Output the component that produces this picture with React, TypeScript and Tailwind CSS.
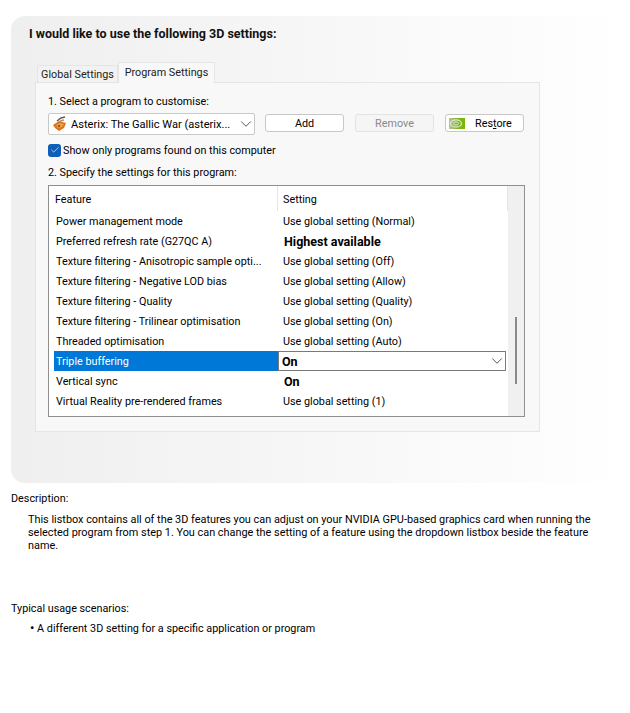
import React from 'react';
import { ChevronDown, Check } from 'lucide-react';

const rows = [
    { feature: 'Power management mode', setting: 'Use global setting (Normal)' },
    { feature: 'Preferred refresh rate (G27QC A)', setting: 'Highest available', bold: true },
    { feature: 'Texture filtering - Anisotropic sample opti...', setting: 'Use global setting (Off)' },
    { feature: 'Texture filtering - Negative LOD bias', setting: 'Use global setting (Allow)' },
    { feature: 'Texture filtering - Quality', setting: 'Use global setting (Quality)' },
    { feature: 'Texture filtering - Trilinear optimisation', setting: 'Use global setting (On)' },
    { feature: 'Threaded optimisation', setting: 'Use global setting (Auto)' },
    { feature: 'Triple buffering', setting: 'On', bold: true, selected: true },
    { feature: 'Vertical sync', setting: 'On', bold: true },
    { feature: 'Virtual Reality pre-rendered frames', setting: 'Use global setting (1)' },
];

const GameIcon = () => (
    <svg width="16" height="16" viewBox="0 0 16 16" className="shrink-0">
        <path d="M1 9 L7 5 L14 7 L12 12 L7 15 L3 12 Z" fill="#d9761f" />
        <path d="M4 9 L8 7 L12 8 L10 11 L6 12 Z" fill="#f0a040" />
        <path d="M5 5 L9 2 L13 1" stroke="#6b5a45" strokeWidth="1.5" fill="none" />
        <path d="M8 5 L12 4" stroke="#a89880" strokeWidth="1.5" fill="none" />
        <circle cx="7" cy="10" r="1" fill="#7a3a10" />
    </svg>
);

const NvidiaIcon = () => (
    <svg width="16" height="11" viewBox="0 0 16 11" className="shrink-0">
        <defs>
            <linearGradient id="nv" x1="0" x2="1" y1="0" y2="0">
                <stop offset="0" stopColor="#b9c4a8" />
                <stop offset="0.5" stopColor="#84b02c" />
                <stop offset="1" stopColor="#76b900" />
            </linearGradient>
        </defs>
        <rect width="16" height="11" fill="url(#nv)" />
        <ellipse cx="7" cy="5.5" rx="5.5" ry="3.6" fill="none" stroke="#dfeac8" strokeWidth="1.2" />
        <ellipse cx="7" cy="5.5" rx="2.6" ry="1.6" fill="none" stroke="#dfeac8" strokeWidth="1" />
    </svg>
);

const Button: React.FC<{ label: React.ReactNode; disabled?: boolean; className?: string }> = ({ label, disabled, className }) => (
    <button className={`h-[18px] w-[79px] rounded-[3px] border flex items-center justify-center ${disabled ? 'border-[#e3e3e3] bg-[#f5f5f5] text-[#8a8a8a]' : 'border-[#c8c8c8] bg-white text-black'} ${className ?? ''}`}>
        {label}
    </button>
);

const App: React.FC = () => {
    return (
        <div className="w-[630px] h-[713px] bg-white text-black text-[10.8px] leading-[13px] font-['Roboto',sans-serif] overflow-hidden pt-4">
            <div className="ml-[11px] h-[467px] rounded-l-[14px] bg-gradient-to-r from-[#efefef] to-white pt-[11px] pl-[18px]">
                <h1 className="font-bold text-[12.5px] leading-[13px] text-[#111]">I would like to use the following 3D settings:</h1>

                <div className="ml-[8px] mt-[22px] flex items-end h-[20px] relative z-10">
                    <div className="h-[17px] w-[81px] bg-[#f2f2f2] border border-b-0 border-[#e5e5e5] flex items-center justify-center text-[#222] whitespace-nowrap">Global Settings</div>
                    <div className="h-[21px] w-[97px] -mb-px pb-[2px] bg-[#f8f8f8] border border-b-0 border-[#e5e5e5] flex items-center justify-center text-[#222] whitespace-nowrap">Program Settings</div>
                </div>

                <div className="ml-[6px] w-[505px] h-[350px] bg-[#f8f8f8] border border-[#e5e5e5] pl-3 pr-[14px] pt-[12px]">
                    <div className="h-[13px]">1. Select a program to customise:</div>
                    <div className="flex items-center mt-[5px]">
                        <div className="w-[207px] h-[22px] bg-white border border-[#c8c8c8] rounded-[2px] flex items-center pl-[3px] pr-[3px] gap-[3px]">
                            <GameIcon />
                            <span className="flex-1 whitespace-nowrap text-[11.1px]">Asterix: The Gallic War (asterix...</span>
                            <ChevronDown size={18} strokeWidth={1.2} className="text-[#444] shrink-0 -ml-[14px] -mr-[4px]" />
                        </div>
                        <Button label="Add" className="ml-[10px] -mt-[2px]" />
                        <Button label="Remove" disabled className="ml-[11px] -mt-[2px]" />
                        <button className="ml-[11px] -mt-[2px] h-[18px] w-[79px] rounded-[3px] border border-[#c8c8c8] bg-white flex items-center pl-[3px]">
                            <NvidiaIcon />
                            <span className="ml-[10px]">Res<span className="underline">t</span>ore</span>
                        </button>
                    </div>
                    <div className="flex items-center mt-[8px] h-[14px]">
                        <span className="w-[13px] h-[13px] rounded-[3px] bg-[#0f5fb8] flex items-center justify-center shrink-0">
                            <Check size={10} strokeWidth={1.5} className="text-white" />
                        </span>
                        <span className="ml-[2px]">Show only programs found on this computer</span>
                    </div>
                    <div className="mt-[9px] h-[13px]">2. Specify the settings for this program:</div>

                    <div className="mt-[6px] w-[477px] h-[232px] border border-[#8f8f8f] bg-white flex">
                        <div className="w-[459px] flex flex-col">
                            <div className="h-[25px] flex items-center shrink-0">
                                <div className="w-[229px] h-full border-r border-[#e5e5e5] pl-[6px] pt-[2px] flex items-center">Feature</div>
                                <div className="flex-1 h-full border-r border-[#e5e5e5] pl-[5px] pt-[2px] flex items-center">Setting</div>
                            </div>
                            {rows.map(row => (
                                <div key={row.feature} className="h-[20px] flex items-center shrink-0 pl-[5px]">
                                    <div className={`w-[224px] h-full flex items-center pl-[2px] ${row.selected ? 'bg-[#0078d7] text-white' : ''}`}>
                                        <span className="whitespace-nowrap">{row.feature}</span>
                                    </div>
                                    {row.selected ? (
                                        <div className="w-[228px] h-full border border-[#7a7a7a] flex items-center justify-between pl-[3px] pr-[2px]">
                                            <span className="font-bold text-[12.5px]">{row.setting}</span>
                                            <ChevronDown size={18} strokeWidth={1.2} className="text-[#444] -mr-[3px]" />
                                        </div>
                                    ) : (
                                        <div className={row.bold ? 'pl-[6px] font-bold text-[12.5px]' : 'pl-[5px]'}>{row.setting}</div>
                                    )}
                                </div>
                            ))}
                        </div>
                        <div className="flex-1 bg-[#f0f0f0] flex justify-center">
                            <div className="w-[2px] h-[67px] mt-[131px] bg-[#8a8a8a]" />
                        </div>
                    </div>
                </div>
            </div>

            <div className="mt-[9px] ml-[11px]">Description:</div>
            <p className="mt-[8px] ml-[28px] w-[575px] text-[10.88px]">This listbox contains all of the 3D features you can adjust on your NVIDIA GPU-based graphics card when running the selected program from step 1. You can change the setting of a feature using the dropdown listbox beside the feature name.</p>
            <div className="mt-[50px] ml-[11px]">Typical usage scenarios:</div>
            <div className="mt-[6px] ml-[30px]"><span className="text-[13px] leading-[13px]">•</span> A different 3D setting for a specific application or program</div>
        </div>
    );
};

export default App;
